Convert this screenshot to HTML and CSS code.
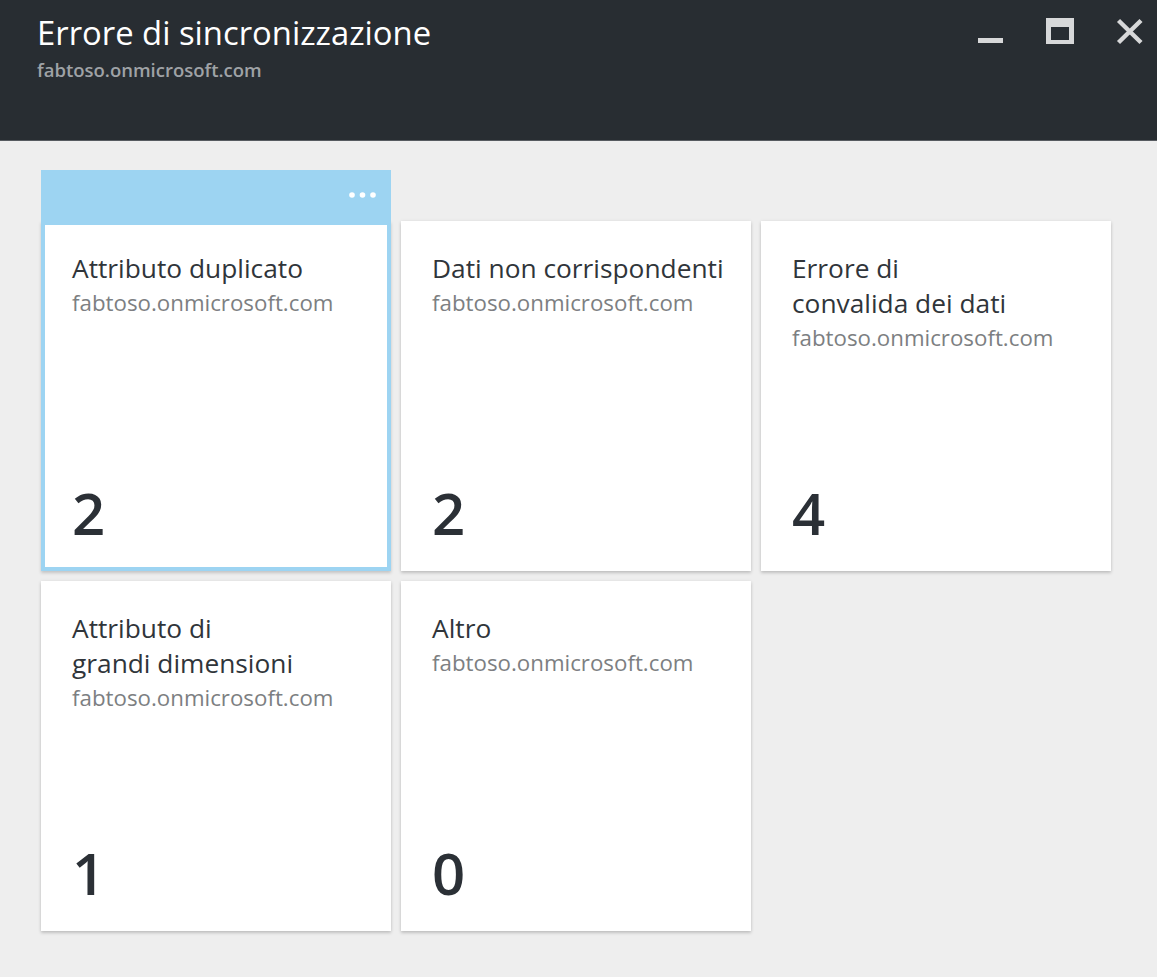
FILE: index.html
```html
<!DOCTYPE html>
<html lang="it">
<head>
<meta charset="utf-8">
<title>Errore di sincronizzazione</title>
<link rel="stylesheet" href="styles.css">
</head>
<body>
<header class="blade-header">
  <div class="titles">
    <h1 class="blade-title">Errore di sincronizzazione</h1>
    <div class="blade-sub">fabtoso.onmicrosoft.com</div>
  </div>
  <div class="controls">
    <button class="ctl" aria-label="Riduci a icona">
      <svg width="36" height="36" viewBox="0 0 36 36"><rect x="6" y="25" width="25" height="5" fill="#d7d8d9"/></svg>
    </button>
    <button class="ctl" aria-label="Ingrandisci">
      <svg width="36" height="36" viewBox="0 0 36 36"><path fill="#d7d8d9" fill-rule="evenodd" d="M4 5h28v26H4z M9 14v13h18V14z"/></svg>
    </button>
    <button class="ctl" aria-label="Chiudi">
      <svg width="36" height="36" viewBox="0 0 36 36"><path stroke="#d7d8d9" stroke-width="4.4" d="M6.5 7.5L29 29.5M29 7.5L6.5 29.5"/></svg>
    </button>
  </div>
</header>
<main class="content">
  <div class="grid">
    <div class="tile selected">
      <div class="tile-bar">
        <svg width="30" height="8" viewBox="0 0 30 8"><circle cx="4" cy="4" r="2.8" fill="#fff"/><circle cx="14.5" cy="4" r="2.8" fill="#fff"/><circle cx="25" cy="4" r="2.8" fill="#fff"/></svg>
      </div>
      <div class="tile-head">
        <div class="tile-title">Attributo duplicato</div>
        <div class="tile-sub">fabtoso.onmicrosoft.com</div>
      </div>
      <div class="tile-num">2</div>
    </div>
    <div class="tile">
      <div class="tile-head">
        <div class="tile-title">Dati non corrispondenti</div>
        <div class="tile-sub">fabtoso.onmicrosoft.com</div>
      </div>
      <div class="tile-num">2</div>
    </div>
    <div class="tile">
      <div class="tile-head">
        <div class="tile-title">Errore di<br>convalida dei dati</div>
        <div class="tile-sub">fabtoso.onmicrosoft.com</div>
      </div>
      <div class="tile-num">4</div>
    </div>
    <div class="tile">
      <div class="tile-head">
        <div class="tile-title">Attributo di<br>grandi dimensioni</div>
        <div class="tile-sub">fabtoso.onmicrosoft.com</div>
      </div>
      <div class="tile-num">1</div>
    </div>
    <div class="tile">
      <div class="tile-head">
        <div class="tile-title">Altro</div>
        <div class="tile-sub">fabtoso.onmicrosoft.com</div>
      </div>
      <div class="tile-num">0</div>
    </div>
  </div>
</main>
</body>
</html>
```

FILE: styles.css
```css
* { box-sizing: border-box; }
html, body { margin: 0; padding: 0; }
body {
  background: #eeeeee;
  font-family: "Open Sans", "Noto Sans", sans-serif;
  width: 1157px;
  min-height: 977px;
}
.blade-header {
  height: 141px;
  background: #282d32;
  border-bottom: 1px solid #575b60;
  display: flex;
  justify-content: space-between;
  align-items: flex-start;
}
.titles { padding: 11px 0 0 37px; }
.blade-title {
  margin: 0;
  font-weight: 400;
  font-size: 32.8px;
  line-height: 44px;
  color: #ffffff;
}
.blade-sub {
  font-size: 18.5px;
  font-weight: 600;
  color: #9fa2a6;
  line-height: 22px;
  margin-top: 4px;
}
.controls {
  display: flex;
  gap: 34px;
  padding: 13px 9px 0 0;
}
.ctl {
  width: 36px;
  height: 36px;
  padding: 0;
  border: 0;
  background: transparent;
  display: block;
}
.ctl svg { display: block; }
.content { padding: 80px 0 0 41px; }
.grid {
  display: grid;
  grid-template-columns: repeat(3, 350px);
  grid-auto-rows: 350px;
  gap: 10px;
}
.tile {
  position: relative;
  background: #ffffff;
  box-shadow: 0 2px 3px rgba(0,0,0,0.18), 0 0 4px rgba(0,0,0,0.06);
  padding: 30px 10px 28px 31px;
  display: flex;
  flex-direction: column;
  justify-content: space-between;
}
.tile.selected { box-shadow: inset 0 0 0 4px #9dd4f2, 0 2px 3px rgba(0,0,0,0.18); }
.tile-bar {
  position: absolute;
  left: 0;
  right: 0;
  top: -51px;
  height: 51px;
  background: #9dd4f2;
  display: flex;
  justify-content: flex-end;
  align-items: flex-start;
  padding: 21px 13px 0 0;
}
.tile-bar svg { display: block; }
.tile-title {
  font-size: 26.3px;
  line-height: 35px;
  color: #30353a;
  white-space: nowrap;
}
.tile-sub {
  font-size: 22.3px;
  line-height: 33px;
  color: #7d7f82;
  white-space: nowrap;
}
.tile-num {
  font-size: 58px;
  font-weight: 600;
  line-height: 60px;
  color: #2b3036;
}
```
